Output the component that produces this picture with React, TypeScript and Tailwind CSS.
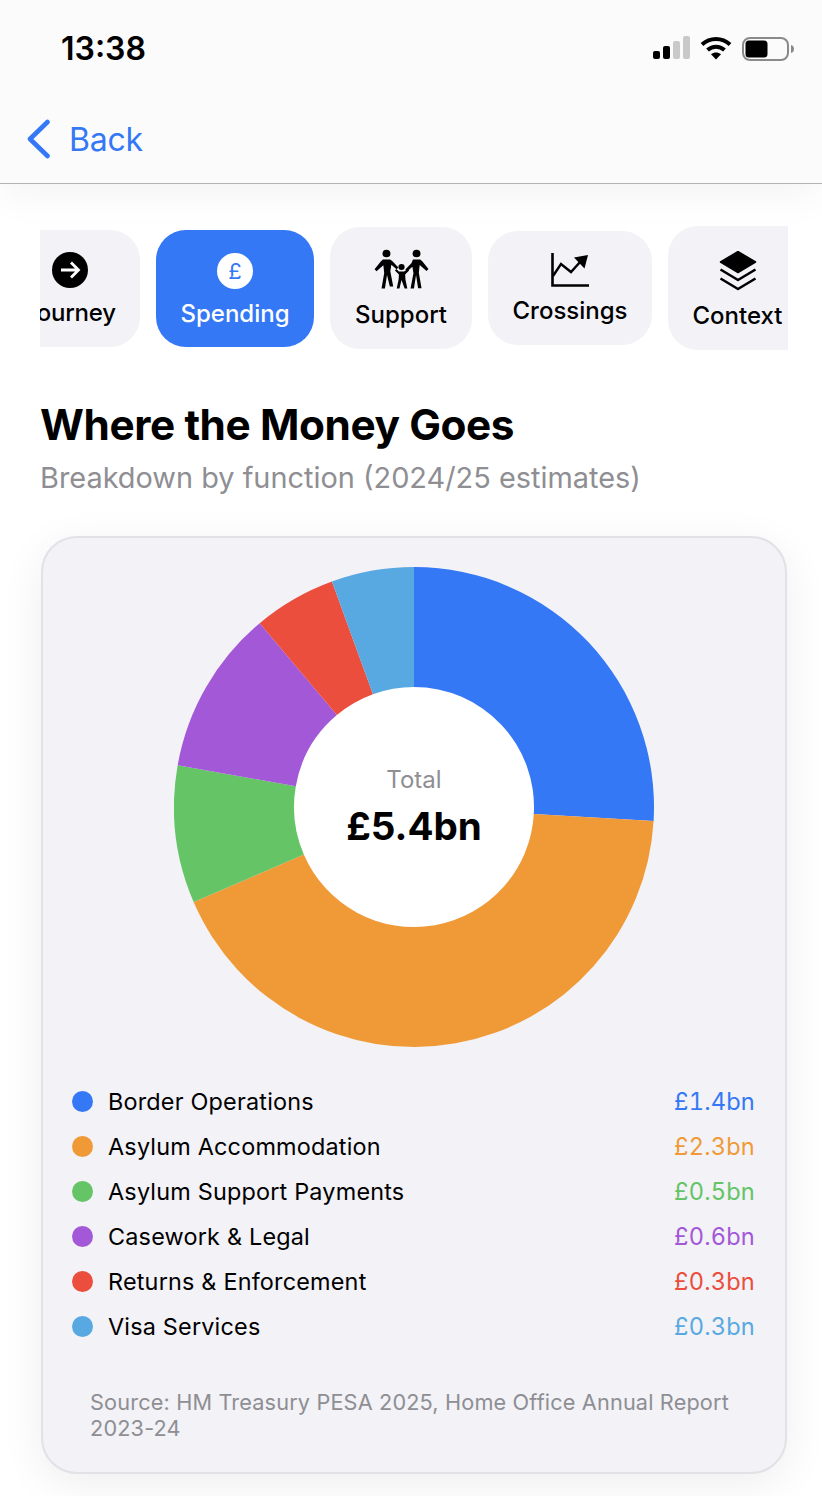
import React from "react";

const FONT = "font-['Inter','Liberation_Sans',sans-serif]";

const segments = [
  { label: "Border Operations", value: "£1.4bn", n: 1.4, color: "#3478f6" },
  { label: "Asylum Accommodation", value: "£2.3bn", n: 2.3, color: "#f09a37" },
  { label: "Asylum Support Payments", value: "£0.5bn", n: 0.5, color: "#65c466" },
  { label: "Casework & Legal", value: "£0.6bn", n: 0.6, color: "#a358d7" },
  { label: "Returns & Enforcement", value: "£0.3bn", n: 0.3, color: "#eb4e3d" },
  { label: "Visa Services", value: "£0.3bn", n: 0.3, color: "#58a9e1" },
];

function Donut() {
  const total = 5.4;
  let acc = 0;
  const R = 240;
  const r = 120;
  const c = 240;
  const pt = (a: number, rad: number) => {
    const t = (a - 90) * (Math.PI / 180);
    return `${(c + rad * Math.cos(t)).toFixed(2)} ${(c + rad * Math.sin(t)).toFixed(2)}`;
  };
  return (
    <svg width="480" height="480" viewBox="0 0 480 480" className="block">
      <circle cx={c} cy={c} r={r + 1} fill="#fff" />
      {segments.map((s) => {
        const a0 = (acc / total) * 360;
        acc += s.n;
        const a1 = (acc / total) * 360;
        const large = a1 - a0 > 180 ? 1 : 0;
        return (
          <path
            key={s.label}
            fill={s.color}
            d={`M${pt(a0, R)} A${R} ${R} 0 ${large} 1 ${pt(a1, R)} L${pt(a1, r)} A${r} ${r} 0 ${large} 0 ${pt(a0, r)} Z`}
          />
        );
      })}
    </svg>
  );
}

function Family() {
  return (
    <svg width="56" height="40" viewBox="0 0 54 40" preserveAspectRatio="none" fill="#000">
      <circle cx="13" cy="4.5" r="3.8" />
      <circle cx="42" cy="4.5" r="3.8" />
      <circle cx="27.5" cy="18" r="3" />
      <path d="M9.5 10.5h7l2 1.5 6 6.5-1.8 1.8-5-4.5-1 6.5 2.8 15.2h-3.3L13.5 26l-2 13.5H8.2l2.6-15.5-.8-7.8-6.6 6-1.9-1.9 6-7.8z" />
      <path d="M38.5 10.5h7l2 1.8 6 7.8-1.9 1.9-6.6-6-.8 7.8 2.6 15.5h-3.3L41.5 26l-2 13.5h-3.3l2.8-15.2-1-6.5-5 4.5-1.8-1.8 6-6.5z" />
      <path d="M25 22.5h5l3.5-2.5 1.3 1.6-3.8 3.8.3 5 1.8 9h-2.6L27.5 31l-2 8.4h-2.6l1.8-9 .3-5-3.8-3.8 1.3-1.6z" />
    </svg>
  );
}

function Trend() {
  return (
    <svg width="38" height="34" viewBox="0 0 38 34" fill="none" stroke="#000">
      <path d="M1.5 0v32.5H38" strokeWidth="2.6" />
      <path d="M2 23 L10 11 L20 19 L30 8" strokeWidth="2.4" />
      <path d="M23 4.5 L37 2 L33.5 15.5Z" fill="#000" stroke="none" />
    </svg>
  );
}

function Layers() {
  return (
    <svg width="38" height="40" viewBox="0 0 38 40" fill="none" stroke="#000" strokeLinejoin="round">
      <path d="M19 0.5 L36.5 11 L19 21.5 L1.5 11Z" fill="#000" strokeWidth="1.5" />
      <path d="M1.5 18.5 L19 29 L36.5 18.5" strokeWidth="2.6" />
      <path d="M1.5 27.5 L19 38 L36.5 27.5" strokeWidth="2.6" />
    </svg>
  );
}

export default function App() {
  return (
    <div className={`${FONT} w-[822px] h-[1496px] overflow-hidden bg-white text-black`}>
      <header className="h-[184px] bg-[#fbfbfc] border-b border-[#b2b2b2] shadow-[0_10px_40px_rgba(0,0,0,0.05)] relative flex flex-col">
        <div className="h-[96px] flex items-center justify-between pl-[61px] pr-[28px]">
          <span className="text-[32px] leading-none font-semibold mt-[1px]">13:38</span>
          <div className="flex items-center">
            <svg width="38" height="24" viewBox="0 0 38 24">
              <rect x="0" y="15" width="7" height="8" rx="2" fill="#000" />
              <rect x="10" y="10" width="7" height="13" rx="2" fill="#000" />
              <rect x="20" y="5" width="7" height="18" rx="2" fill="#c9c9c9" />
              <rect x="30" y="0" width="7" height="23" rx="2" fill="#c9c9c9" />
            </svg>
            <svg width="32" height="24" viewBox="0 0 32 24" fill="none" stroke="#000" strokeWidth="4" className="ml-[9px]">
              <path d="M2 8.5C10 1 22 1 30 8.5" />
              <path d="M7.5 14C12.5 9.5 19.5 9.5 24.5 14" />
              <path d="M16 23.5l-5-5.2c3-2.4 7-2.4 10 0z" fill="#000" stroke="none" />
            </svg>
            <svg width="52" height="24" viewBox="0 0 52 24" className="ml-[10px] mt-[2px]">
              <rect x="1" y="1" width="45" height="22" rx="7" fill="none" stroke="#8a8a8a" strokeWidth="2" />
              <rect x="3.5" y="3.5" width="22" height="17" rx="3.5" fill="#000" />
              <path d="M49 8c2 .5 3 2 3 4s-1 3.500-3 4z" fill="#8a8a8a" />
            </svg>
          </div>
        </div>
        <div className="flex items-center pl-[26px] h-[52px] mt-[18px] gap-[17px] text-[#3478f6]">
          <svg width="26" height="40" viewBox="0 0 26 40" fill="none" stroke="#3478f6" strokeWidth="4.6" strokeLinecap="round" strokeLinejoin="round" className="mt-[-2px]">
            <path d="M21.5 3 L4 20 L21.5 37" />
          </svg>
          <span className="text-[32px] leading-none tracking-[-0.2px]">Back</span>
        </div>
      </header>

      <main className="px-[40px]">
        <nav className="mt-[42px] h-[124px] w-[748px] overflow-hidden flex items-center gap-[16px] text-[24px] leading-none font-[450]">
          <div className="shrink-0 ml-[-41px] w-[141px] h-[117px] rounded-[30px] bg-[#f2f2f7] flex flex-col items-center pt-[22px] gap-[13px]">
            <svg width="36" height="36" viewBox="0 0 36 36" fill="none">
              <circle cx="18" cy="18" r="18" fill="#000" />
              <path d="M9 18h17M19 10.5l7.5 7.5-7.5 7.5" stroke="#fff" strokeWidth="2.8" />
            </svg>
            <span className="whitespace-nowrap tracking-[-0.2px]">Journey</span>
          </div>
          <div className="shrink-0 w-[158px] h-[117px] rounded-[30px] bg-[#3478f6] text-white flex flex-col items-center pt-[23px] gap-[13px]">
            <div className="w-[36px] h-[36px] rounded-full bg-white text-[#3478f6] flex items-center justify-center text-[22px] font-normal">£</div>
            <span>Spending</span>
          </div>
          <div className="shrink-0 w-[142px] h-[122px] rounded-[30px] bg-[#f2f2f7] flex flex-col items-center pt-[22px] gap-[14px]">
            <Family />
            <span>Support</span>
          </div>
          <div className="shrink-0 w-[164px] h-[114px] rounded-[30px] bg-[#f2f2f7] flex flex-col items-center pt-[22px] gap-[12px]">
            <Trend />
            <span>Crossings</span>
          </div>
          <div className="shrink-0 w-[140px] h-[124px] rounded-l-[30px] bg-[#f2f2f7] flex flex-col items-center pt-[25px] gap-[13px] pr-[6px] pl-[5px] mr-[-20px]">
            <Layers />
            <span>Context</span>
          </div>
        </nav>

        <h1 className="mt-[50px] text-[42.3px] leading-[50px] font-bold tracking-[-0.4px] whitespace-nowrap">Where the Money Goes</h1>
        <p className="mt-[8px] text-[28.9px] leading-[40px] text-[#8e8e93] whitespace-nowrap">Breakdown by function (2024/25 estimates)</p>

        <section className="mt-[38px] ml-[1px] w-[746px] h-[938px] rounded-[36px] bg-[#f2f2f7] border-2 border-[#e1e1e6] shadow-[0_10px_44px_rgba(0,0,0,0.07)] flex flex-col">
          <div className="relative self-center mt-[29px]">
            <Donut />
            <div className="absolute inset-0 flex flex-col items-center justify-center pt-[10px]">
              <span className="text-[24px] leading-[30px] text-[#8e8e93] mt-[-8px]">Total</span>
              <span className="text-[38.6px] leading-[50px] font-bold mt-[6px]">£5.4bn</span>
            </div>
          </div>
          <ul className="mt-[32px] pl-[29px] pr-[30px] flex flex-col">
            {segments.map((s) => (
              <li key={s.label} className="h-[45px] flex items-center text-[23.4px] leading-none tracking-[0.2px]">
                <span className="w-[21px] h-[21px] rounded-full" style={{ backgroundColor: s.color }} />
                <span className="ml-[15px] flex-1">{s.label}</span>
                <span className="text-[23.6px] tabular-nums tracking-[0.2px]" style={{ color: s.color }}>{s.value}</span>
              </li>
            ))}
          </ul>
          <p className="mt-[40px] ml-[47px] mr-[40px] text-[21.7px] leading-[26px] text-[#8e8e93] tracking-[0.15px]">
            Source: HM Treasury PESA 2025, Home Office Annual Report 2023-24
          </p>
        </section>
      </main>
    </div>
  );
}
